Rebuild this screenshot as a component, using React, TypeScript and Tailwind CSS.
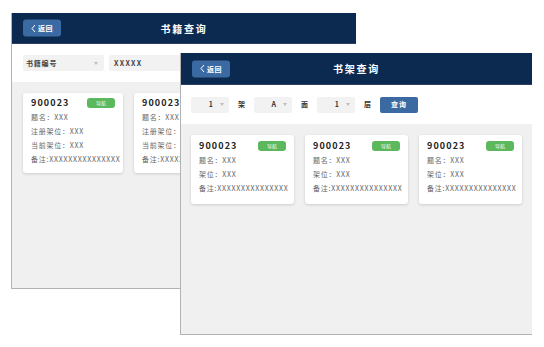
import React from 'react';

const font = { fontFamily: '"Noto Sans CJK SC", "Noto Sans", sans-serif' };

const BackButton: React.FC = () => (
  <div className="flex h-[17px] w-[38px] items-center justify-center gap-[2px] rounded-[3px] bg-[#3b6aa2] text-[7px] font-bold text-white">
    <svg width="5" height="8" viewBox="0 0 5 8" fill="none">
      <path d="M4 0.5 L1 4 L4 7.5" stroke="white" strokeWidth="1" />
    </svg>
    <span className="tracking-[0.5px]">返回</span>
  </div>
);

const Header: React.FC<{ title: string; height: string }> = ({ title, height }) => (
  <div className={`relative flex ${height} items-center justify-center border-b border-[#2c3f63] bg-[#0c2a4f]`}>
    <div className="absolute left-[11px] top-1/2 -translate-y-1/2">
      <BackButton />
    </div>
    <span className="text-[10px] font-bold tracking-[1.8px] text-white">{title}</span>
  </div>
);

const Arrow: React.FC = () => (
  <svg width="4" height="3" viewBox="0 0 4 3">
    <path d="M0 0 L4 0 L2 3 Z" fill="#bdbdbd" />
  </svg>
);

interface Card {
  id: string;
  lines: string[];
}

const BookCard: React.FC<{ card: Card; width: string; pt: string; pb: string }> = ({ card, width, pt, pb }) => (
  <div className={`flex ${width} shrink-0 flex-col rounded-[3px] bg-white px-2 ${pt} ${pb} shadow-[0_1px_3px_rgba(0,0,0,0.15)]`}>
    <div className="flex h-[14px] items-center justify-between">
      <span className="text-[9px] font-bold tracking-[1.1px] text-[#222]">{card.id}</span>
      <span className="flex h-[10px] w-[28px] items-center justify-center rounded-[3px] bg-[#5cb85c] text-[5px] text-white">导航</span>
    </div>
    {card.lines.map((line, i) => (
      <div key={i} className="h-[14px] whitespace-nowrap text-[7px] leading-[14px] tracking-[0.75px] text-[#666]">
        {line}
      </div>
    ))}
  </div>
);

const bookCard: Card = {
  id: '900023',
  lines: ['题名：XXX', '注册架位：XXX', '当前架位：XXX', '备注:XXXXXXXXXXXXXXX'],
};

const shelfCard: Card = {
  id: '900023',
  lines: ['题名：XXX', '架位：XXX', '备注:XXXXXXXXXXXXXXX'],
};

const ShelfSelect: React.FC<{ value: string }> = ({ value }) => (
  <div className="flex h-4 w-[38px] items-center justify-end gap-[7px] rounded-[2px] bg-[#f2f2f2] pr-[5px] text-[7px] font-bold text-[#333]">
    <span>{value}</span>
    <Arrow />
  </div>
);

const App: React.FC = () => {
  return (
    <div className="relative h-[347px] w-[544px] overflow-hidden bg-white" style={font}>
      {/* 书籍查询 */}
      <div className="absolute left-[11px] top-[13px] flex h-[276px] w-[345px] flex-col border-b border-l border-[#b3b3b3] bg-[#f0f0f0]">
        <Header title="书籍查询" height="h-[31px]" />
        <div className="flex h-[38px] items-center gap-[5px] bg-white px-[11px]">
          <div className="flex h-4 w-[81px] items-center justify-between rounded-[2px] bg-[#f2f2f2] pl-[3px] pr-[6px]">
            <span className="text-[7px] font-bold tracking-[0.8px] text-[#444]">书籍编号</span>
            <Arrow />
          </div>
          <div className="flex h-4 w-[90px] items-center rounded-[2px] bg-[#f2f2f2] pl-[5px]">
            <span className="text-[7px] font-bold tracking-[1.3px] text-[#444]">XXXXX</span>
          </div>
        </div>
        <div className="flex gap-[11px] p-[11px]">
          <BookCard card={bookCard} width="w-[100px]" pt="pt-[3px]" pb="pb-[7px]" />
          <BookCard card={bookCard} width="w-[100px]" pt="pt-[3px]" pb="pb-[7px]" />
        </div>
      </div>

      {/* 书架查询 */}
      <div className="absolute left-[180px] top-[53px] flex h-[282px] w-[352px] flex-col border-b border-l border-[#b3b3b3] bg-[#f0f0f0]">
        <Header title="书架查询" height="h-[32px]" />
        <div className="flex h-[39px] items-center gap-2 bg-white px-[10px] text-[7px] font-bold text-[#333]">
          <ShelfSelect value="1" />
          <span className="w-[9px] text-center">架</span>
          <ShelfSelect value="A" />
          <span className="w-[9px] text-center">面</span>
          <ShelfSelect value="1" />
          <span className="w-[9px] text-center">层</span>
          <div className="flex h-4 w-[38px] items-center justify-center rounded-[2px] bg-[#3b6aa2] tracking-[1px] text-white">
            查询
          </div>
        </div>
        <div className="flex gap-[11px] p-[10px] pt-[11px]">
          <BookCard card={shelfCard} width="w-[103px]" pt="pt-[4px]" pb="pb-[9px]" />
          <BookCard card={shelfCard} width="w-[103px]" pt="pt-[4px]" pb="pb-[9px]" />
          <BookCard card={shelfCard} width="w-[103px]" pt="pt-[4px]" pb="pb-[9px]" />
        </div>
      </div>
    </div>
  );
};

export default App;
